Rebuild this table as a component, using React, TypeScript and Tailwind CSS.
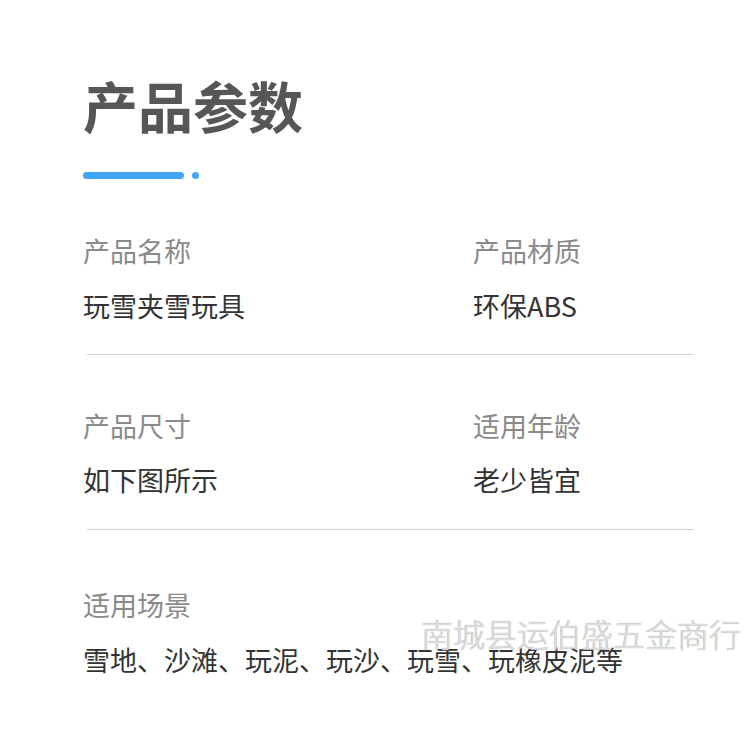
import React from "react";

const font = { fontFamily: '"Noto Sans CJK SC", "Noto Sans", sans-serif' };

function Field({ label, value, gap = 28 }: { label: string; value: string; gap?: number }) {
  return (
    <div className="flex flex-col">
      <div className="text-[27px] leading-[27px] text-[#8a8a8a]">{label}</div>
      <div
        className={
          (gap === 27 ? "mt-[27px]" : "mt-[28px]") + " text-[27px] leading-[27px] text-[#333333]"
        }
      >
        {value}
      </div>
    </div>
  );
}

export default function App() {
  return (
    <div
      className="relative w-[750px] h-[730px] bg-white overflow-hidden pl-[83px] pt-[77px]"
      style={font}
    >
      <h1 className="text-[55px] leading-[55px] font-bold text-[#565656]">产品参数</h1>
      <div className="mt-[40px] flex items-center gap-[8px]">
        <div className="h-[7px] w-[101px] rounded-full bg-[#42a5f5]" />
        <div className="h-[7px] w-[7px] rounded-full bg-[#42a5f5]" />
      </div>

      <div className="mt-[58px] grid grid-cols-[390px_1fr]">
        <Field label="产品名称" value="玩雪夹雪玩具" />
        <Field label="产品材质" value="环保ABS" />
      </div>
      <div className="mt-[35px] ml-[4px] h-px w-[606px] bg-[#cfcfcf]" />

      <div className="mt-[57px] grid grid-cols-[390px_1fr]">
        <Field label="产品尺寸" value="如下图所示" gap={27} />
        <Field label="适用年龄" value="老少皆宜" gap={27} />
      </div>
      <div className="mt-[36px] ml-[4px] h-px w-[606px] bg-[#cfcfcf]" />

      <div className="mt-[61px]">
        <Field label="适用场景" value="雪地、沙滩、玩泥、玩沙、玩雪、玩橡皮泥等" />
      </div>

      <div className="absolute left-[421px] top-[615px] text-[32px] leading-[36px] font-light text-[#dedede] whitespace-nowrap [text-shadow:0_0_1px_#8f8f8f]">
        南城县运伯盛五金商行
      </div>
    </div>
  );
}
